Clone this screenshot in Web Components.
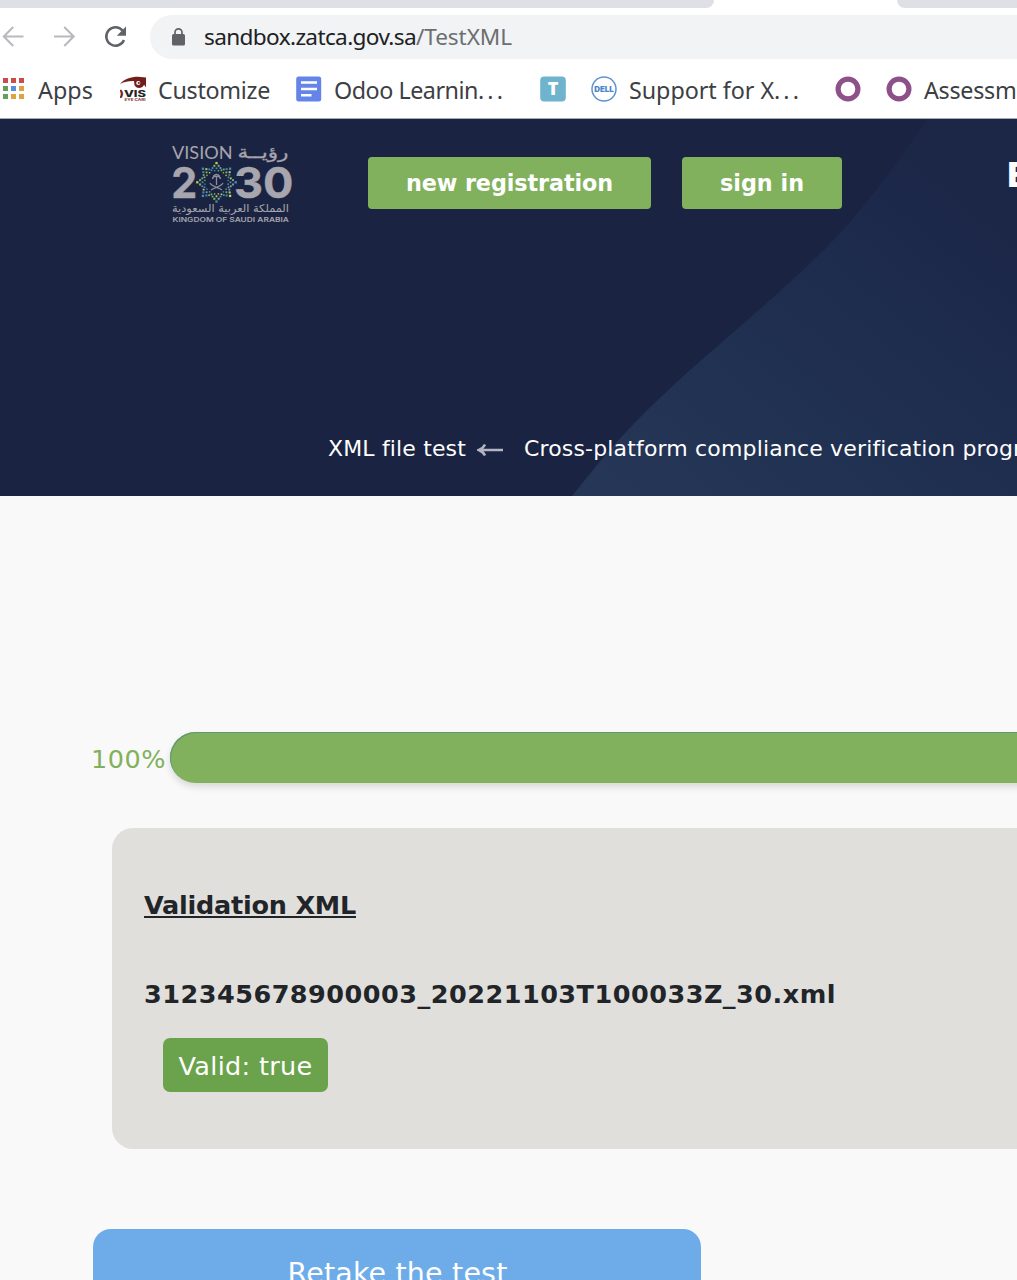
<!DOCTYPE html>
<html lang="en">
<head>
<meta charset="utf-8">
<title>XML file test</title>
<style>
html,body{margin:0;height:1280px;overflow:hidden;background:#f9f9f9}
</style>
</head>
<body>
<app-page></app-page>
<script>
const define = (name, html, setup) => {
  const tpl = document.createElement('template');
  tpl.innerHTML = html;
  customElements.define(name, class extends HTMLElement {
    constructor() {
      super();
      this.attachShadow({mode: 'open'}).append(tpl.content.cloneNode(true));
    }
    connectedCallback() { if (setup) setup(this, this.shadowRoot); }
  });
};

// A single line of text tracked to a given advance width.
define('text-run', `<style>
:host{display:inline-block;white-space:pre;flex:none}
</style><slot></slot>`, host => {
  const w = +host.getAttribute('w');
  if (!w) return;
  const natural = host.getBoundingClientRect().width;
  host.style.letterSpacing = ((w - natural) / host.textContent.length) + 'px';
});

define('tab-strip', `<style>
:host{display:flex;height:8px;background:#fff;justify-content:space-between}
i{display:block;background:#dfe0e6}
.a{width:714px;border-radius:0 0 9px 0}
.b{width:120px;border-radius:0 0 0 9px}
</style><i class="a"></i><i class="b"></i>`);

define('nav-bar', `<style>
:host{display:flex;height:51px;background:#fff;box-sizing:border-box;padding-top:7px;align-items:stretch}
svg{display:block;flex:none}
.pill{display:flex;align-items:center;flex:1;background:#f1f3f4;border-radius:22px 0 0 22px;height:44px;padding-left:22px}
.lock{margin-right:19px}
.url{font:22.600px/44px "Noto Sans",sans-serif;color:#202124;display:flex}
.url .p{color:#6b6e72}
</style>
<svg width="150" height="44" viewBox="0 15 150 44" fill="none">
<g stroke="#b9babd" stroke-width="2.1"><path d="M23.5 36.5H4M13.2 27L3.8 36.5l9.4 9.5"/><path d="M54 36.5h19.5M64.3 27l9.4 9.5-9.4 9.5"/></g>
<path d="M122.6 30.6A9.2 9.2 0 1 0 124 40" stroke="#5f6368" stroke-width="2.5"/><path d="M126 26.5v9.2h-9.2z" fill="#5f6368"/>
</svg>
<div class="pill">
<svg class="lock" width="13" height="18" viewBox="0 0 13 18"><rect x="0" y="6" width="13" height="11.5" rx="1.6" fill="#5f6368"/><path d="M3 7V4.4a3.5 3.5 0 0 1 7 0V7" fill="none" stroke="#5f6368" stroke-width="1.7"/></svg>
<div class="url"><text-run w="212">sandbox.zatca.gov.sa</text-run><text-run class="p" w="96">/TestXML</text-run></div>
</div>`);

define('book-mark', `<style>
:host{display:flex;align-items:center;flex:none}
.label{font:23.300px/32px "Noto Sans",sans-serif;color:#3c4043;margin:2px 0 0 12px}
:host([bare]) .label{display:none}
</style><slot name="icon"></slot><div class="label"><slot></slot></div>`);

define('bookmarks-bar', `<style>
:host{display:flex;height:60px;box-sizing:border-box;border-bottom:1px solid #a6abb8;background:#fff;align-items:center;padding-left:3px;overflow:hidden}
svg{display:block;flex:none}
</style>
<book-mark><svg slot="icon" width="23" height="21" viewBox="0 0 23 21"><g fill="#cb4d49"><path d="M0 0h5v5H0zM8 0h5v5H8zM16 0h5v5h-5z"/></g><path fill="#63a05a" d="M0 8h5v5H0zM0 16h5v5H0z"/><path fill="#5b8de2" d="M8 8h5v5H8z"/><path fill="#d9a441" d="M16 8h5v5h-5zM8 16h5v5H8zM16 16h5v5h-5z"/></svg><text-run w="55">Apps</text-run></book-mark>
<book-mark style="margin-left:27px"><svg slot="icon" width="26" height="26" viewBox="0 0 26 26"><path fill="#711f1d" d="M0 8C4 3 11 .8 18 .8L26 1.500v10c-2-4-5-6-8-6-6-1-12-.5-18 2.500z"/><path fill="#711f1d" d="M14 5h10v4c-2 4-8 4-9.500 0z"/><circle cx="18.300" cy="7" r="2.100" fill="#fff"/><circle cx="18.800" cy="7" r="1.100" fill="#711f1d"/><g font-family="Inter,sans-serif" font-weight="800"><text x="-1" y="20.800" font-size="9" textLength="27" lengthAdjust="spacingAndGlyphs" fill="#242424"><tspan fill="#711f1d">)</tspan>VIS</text><text x="4.500" y="25.300" font-size="3.800" textLength="21" lengthAdjust="spacingAndGlyphs" fill="#8b4b49">EYE CARI</text></g></svg><text-run w="112">Customize</text-run></book-mark>
<book-mark style="margin-left:26px"><svg slot="icon" width="26" height="26" viewBox="0 0 26 26"><rect x=".2" y=".5" width="25" height="25" rx="2.500" fill="#6584ea"/><path d="M5 6.500h16M5 13h16M5 19.200h10.500" stroke="#fff" stroke-width="2.600"/></svg><text-run w="144">Odoo Learnin</text-run><text-run w="28">...</text-run></book-mark>
<book-mark bare style="margin-left:34px"><svg slot="icon" width="26" height="26" viewBox="0 0 26 26"><rect x=".2" y=".4" width="25.600" height="25.200" rx="4" fill="#6fb4cc"/><text x="13" y="19.400" text-anchor="middle" font-family="Open Sans,sans-serif" font-weight="800" font-size="18" fill="#fff">T</text></svg></book-mark>
<book-mark style="margin-left:25px"><svg slot="icon" width="26" height="26" viewBox="0 0 26 26"><circle cx="13" cy="13" r="12" fill="#fff" stroke="#5f93d0" stroke-width="1.500"/><text x="3.300" y="15.800" font-family="Inter,sans-serif" font-weight="900" font-size="7.400" textLength="19.500" lengthAdjust="spacingAndGlyphs" fill="#4c86c9">DELL</text></svg><text-run w="145">Support for X</text-run><text-run w="28">...</text-run></book-mark>
<book-mark bare style="margin-left:33px"><svg slot="icon" width="26" height="26" viewBox="0 0 26 26"><circle cx="13" cy="13" r="9.900" fill="none" stroke="#8e5088" stroke-width="5.200"/></svg></book-mark>
<book-mark style="margin-left:25px"><svg slot="icon" width="26" height="26" viewBox="0 0 26 26"><circle cx="13" cy="13" r="9.900" fill="none" stroke="#8e5088" stroke-width="5.200"/></svg><text-run w="92.500">Assessm</text-run></book-mark>`);

define('vision-logo', `<style>:host{display:block;flex:none}svg{display:block}</style>
<svg width="124" height="86" viewBox="171 140 124 86" fill="#a7a5ad">
<text x="172" y="159.300" font-family="Lato,sans-serif" font-size="17.500" textLength="60.500" lengthAdjust="spacingAndGlyphs">VISION</text>
<text x="288.500" y="157.500" direction="rtl" font-family="DejaVu Sans,sans-serif" font-size="17" textLength="51" lengthAdjust="spacingAndGlyphs" stroke="#a7a5ad" stroke-width=".3">رؤيــة</text>
<g font-family="Inter,sans-serif" font-weight="700" font-size="42.500" stroke="#a7a5ad" stroke-width=".4"><text x="171.300" y="198" textLength="26" lengthAdjust="spacingAndGlyphs">2</text><text x="234" y="198" textLength="59.500" lengthAdjust="spacingAndGlyphs">30</text></g>
<g id="star"></g>
<g fill="none" stroke="#8d8c99" stroke-width="1.300"><path d="M216.500 177v8M210 183c2 4 8 4 12 7M223 183c-2 4-8 4-12 7"/><path d="M212.500 179q.5-3.500 4-2.500q3.500-1 4 2.500M213.500 176q3-3 6 0" stroke-width="1.600"/></g>
<text x="289" y="212" direction="rtl" font-family="DejaVu Sans,sans-serif" font-size="10.500" textLength="117" lengthAdjust="spacingAndGlyphs">المملكة العربية السعودية</text>
<text x="172.500" y="222.200" font-family="Inter,sans-serif" font-weight="600" font-size="6.600" textLength="116.500" lengthAdjust="spacingAndGlyphs">KINGDOM OF SAUDI ARABIA</text>
</svg>`, (host, root) => {
  const g = root.getElementById('star');
  const colors = ['#3f8f9a', '#8fb552', '#4f86b8', '#6fae68', '#c0cc62', '#6f9dc0'];
  const dot = (a, r, s, c) => {
    const d = document.createElementNS('http://www.w3.org/2000/svg', 'rect');
    d.setAttribute('x', 216.5 + Math.sin(a) * r - s / 2);
    d.setAttribute('y', 182.3 - Math.cos(a) * r - s / 2);
    d.setAttribute('width', s); d.setAttribute('height', s);
    d.setAttribute('fill', colors[c % 6]);
    g.append(d);
  };
  // Eight arms, each narrowing from its base to one square at its tip.
  for (let k = 0; k < 8; k++) {
    const a = k * Math.PI / 4;
    dot(a, 19.2, 2.3, k * 2 + 4);
    dot(a - .13, 16.6, 2, k + 1);
    dot(a + .13, 16.6, 2, k + 3);
    dot(a - .27, 14.8, 1.8, k + 2);
    dot(a, 14, 1.8, k);
    dot(a + .27, 14.8, 1.8, k + 5);
    dot(a + .3927, 13, 1.7, k * 5 + 1);
    dot(a - .16, 11.8, 1.4, k);
    dot(a + .16, 11.8, 1.4, k + 3);
  }
});

define('green-button', `<style>
:host{display:flex;align-items:center;justify-content:center;flex:none;height:52px;border-radius:4px;background:#82b15d;color:#fff;font:bold 22.300px/52px "DejaVu Sans",sans-serif}
</style><slot></slot>`);

define('hero-banner', `<style>
:host{display:grid;height:377px;background:#1a2442;overflow:hidden;color:#fff}
.bg,.content{grid-area:1/1;min-width:0}
.bg{display:block}
.content{display:flex;flex-direction:column;justify-content:space-between}
.top{display:flex;padding:21px 0 0 171px}
.b1{width:283px;margin:17px 0 0 73px}
.b2{width:160px;margin:17px 0 0 31px}
.brand{font:bold 34px/40px "DejaVu Sans",sans-serif;margin:15px 0 0 164px;width:11px;overflow:hidden;white-space:nowrap}
.crumbs{display:flex;align-items:center;font:22px/30px "DejaVu Sans",sans-serif;padding:0 0 32px 328px;white-space:nowrap}
.crumbs svg{margin:2px 20px 0 11px;flex:none}
</style>
<svg class="bg" width="1017" height="377" viewBox="0 119 1017 377">
<defs><linearGradient id="g" gradientUnits="userSpaceOnUse" x1="620" y1="490" x2="900" y2="150"><stop offset="0" stop-color="#253656"/><stop offset=".45" stop-color="#203050"/><stop offset=".8" stop-color="#1d2a4c"/><stop offset="1" stop-color="#1c2748"/></linearGradient></defs>
<path fill="url(#g)" d="M928 119C900 158 880 187 852 220C810 268 765 304 720 344C680 378 640 415 606 454L572 496H1017V119z"/>
</svg>
<div class="content">
<div class="top"><vision-logo></vision-logo>
<green-button class="b1"><text-run w="207">new registration</text-run></green-button>
<green-button class="b2"><text-run w="84">sign in</text-run></green-button>
<div class="brand">E</div></div>
<div class="crumbs"><text-run w="138">XML file test</text-run>
<svg width="27" height="14" viewBox="0 0 27 14"><path d="M26 7H3M8 1.500Q6 5.500 1.800 7Q6 8.500 8 12.500" fill="none" stroke="#b3b5c4" stroke-width="2.500"/></svg>
<text-run w="533.500">Cross-platform compliance verification program</text-run></div>
</div>`);

define('progress-row', `<style>
:host{display:flex;height:51px;align-items:center;padding-left:91px}
.pct{font:25.500px/51px "DejaVu Sans",sans-serif;color:#82b15d;width:78.500px;padding-top:2px;height:51px;box-sizing:border-box}
.bar{flex:1;height:51px;box-sizing:border-box;border-radius:26px 0 0 26px;background:#82b15d;box-shadow:0 4px 7px rgba(0,0,0,.13),inset 1px 1px 0 #5f9972;margin-right:-20px}
</style><div class="pct"><text-run w="75">100%</text-run></div><div class="bar"></div>`);

define('result-card', `<style>
:host{display:block;box-sizing:border-box;height:321px;margin-left:112px;padding:60px 0 0 32px;border-radius:21px 0 0 21px;background:#e0dfdb;color:#212529;font:bold 25.500px/34px "DejaVu Sans",sans-serif}
.title{display:flex;height:34px}
.title text-run{border-bottom:2px solid #212529;line-height:26px;margin-top:4px;height:26px;box-sizing:border-box}
.file{display:flex;margin-top:55px}
.badge{display:flex;align-items:center;justify-content:center;box-sizing:border-box;width:165px;height:54px;margin:27px 0 0 19px;padding-top:1px;border-radius:7px;background:#6ba34c;color:#fff;font-weight:400}
</style>
<div class="title"><text-run w="212">Validation XML</text-run></div>
<div class="file"><text-run w="692">312345678900003_20221103T100033Z_30.xml</text-run></div>
<div class="badge"><text-run w="134">Valid: true</text-run></div>`);

define('retake-button', `<style>
:host{display:flex;justify-content:center;box-sizing:border-box;width:608px;height:90px;margin-left:93px;padding:25px 0 0 1px;border-radius:18px;background:#6dace9;color:#fff;font:28.500px/40px "DejaVu Sans",sans-serif}
</style><text-run w="220">Retake the test</text-run>`);

define('app-page', `<style>
:host{display:flex;flex-direction:column;width:1017px;height:1280px;overflow:hidden;background:#f9f9f9}
:host>*{flex:none}
progress-row{margin-top:236px}
result-card{margin-top:45px}
retake-button{margin-top:80px}
</style>
<tab-strip></tab-strip><nav-bar></nav-bar><bookmarks-bar></bookmarks-bar>
<hero-banner></hero-banner><progress-row></progress-row>
<result-card></result-card><retake-button></retake-button>`);
</script>
</body>
</html>
